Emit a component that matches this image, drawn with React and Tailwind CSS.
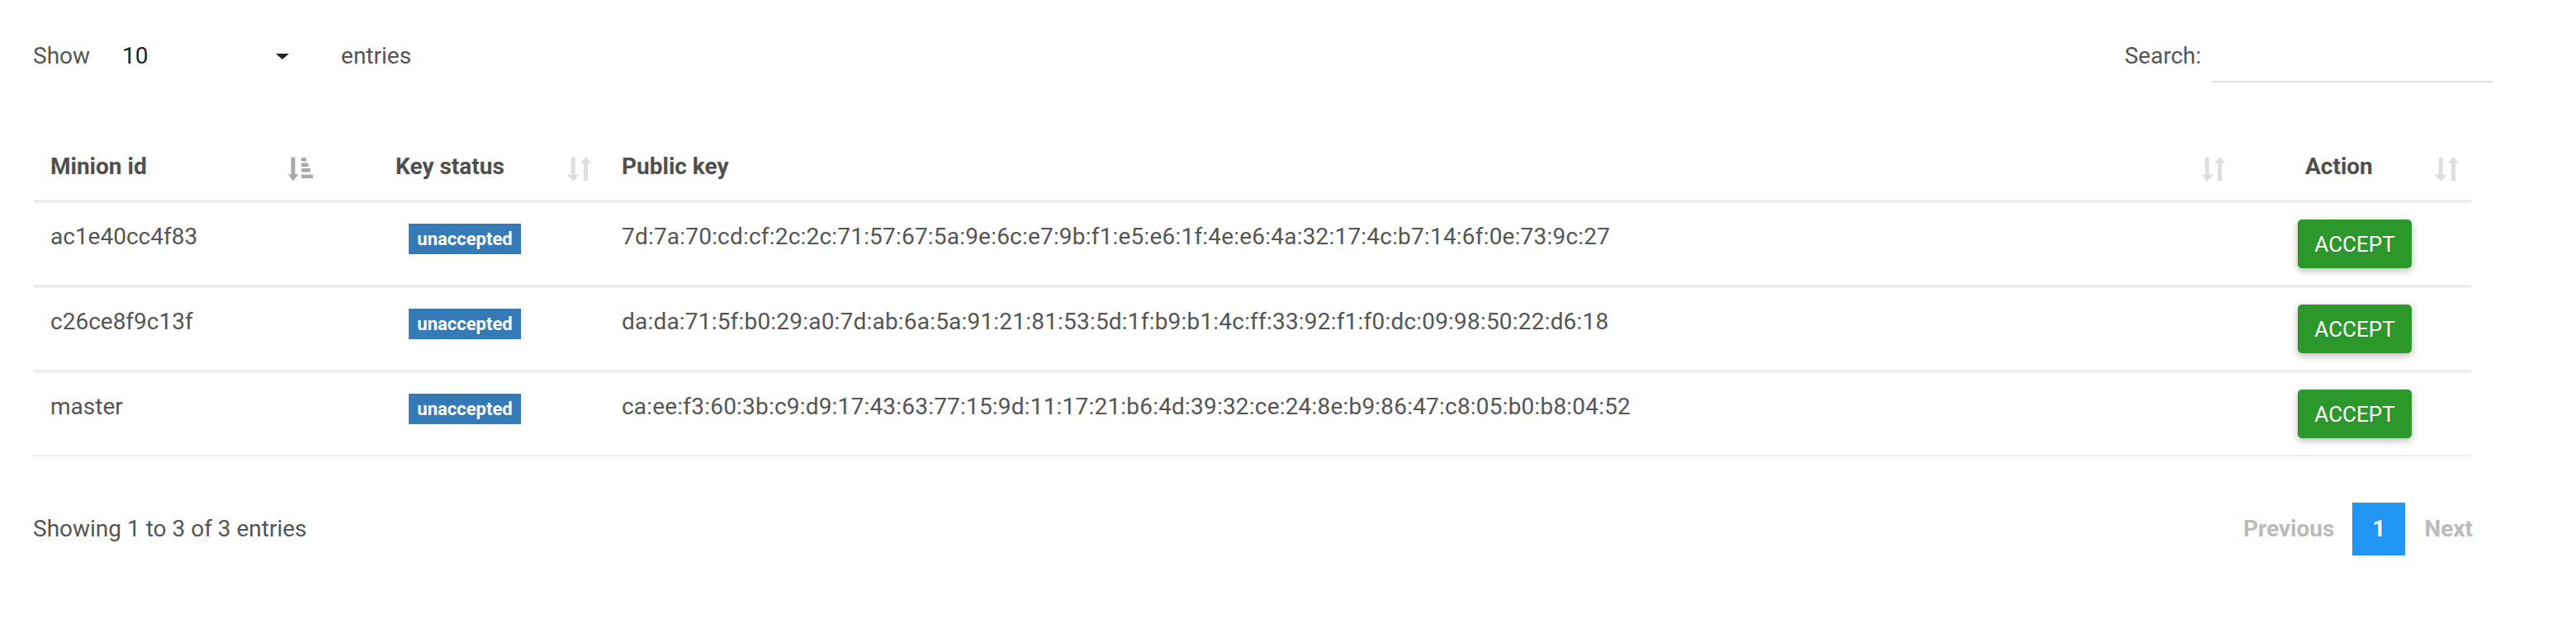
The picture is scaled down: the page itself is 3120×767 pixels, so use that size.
import React from 'react'

const rows = [
  { id: 'ac1e40cc4f83', key: '7d:7a:70:cd:cf:2c:2c:71:57:67:5a:9e:6c:e7:9b:f1:e5:e6:1f:4e:e6:4a:32:17:4c:b7:14:6f:0e:73:9c:27' },
  { id: 'c26ce8f9c13f', key: 'da:da:71:5f:b0:29:a0:7d:ab:6a:5a:91:21:81:53:5d:1f:b9:b1:4c:ff:33:92:f1:f0:dc:09:98:50:22:d6:18' },
  { id: 'master', key: 'ca:ee:f3:60:3b:c9:d9:17:43:63:77:15:9d:11:17:21:b6:4d:39:32:ce:24:8e:b9:86:47:c8:05:b0:b8:04:52' },
]

// sorted ascending icon (arrow + stepped bars)
function SortAsc() {
  return (
    <svg width="30" height="30" viewBox="0 0 30 30" className="block">
      <rect x="3.5" y="0.5" width="5" height="22" fill="#a9a9a9" />
      <polygon points="0,21 12.5,21 6,29.5" fill="#a9a9a9" />
      <rect x="16" y="1" width="6" height="4.5" fill="#a9a9a9" />
      <rect x="16" y="7.5" width="8.5" height="4.5" fill="#a9a9a9" />
      <rect x="16" y="14" width="11" height="4.5" fill="#a9a9a9" />
      <rect x="16" y="21.5" width="14" height="4.5" fill="#a9a9a9" />
    </svg>
  )
}

// unsorted icon (down + up arrows)
function SortBoth() {
  return (
    <svg width="29" height="30" viewBox="0 0 29 30" className="block">
      <rect x="4.7" y="0.7" width="5" height="22" fill="#dedede" />
      <polygon points="0,21.7 14.7,21.7 7.3,30" fill="#dedede" />
      <polygon points="16,8 29,8 22.5,0" fill="#dedede" />
      <rect x="20" y="7" width="5" height="22" fill="#dedede" />
    </svg>
  )
}

const grid = 'grid grid-cols-[360px_336px_1980px_277px]'

export default function App() {
  return (
    <div className="w-[3120px] h-[767px] bg-white px-[40px] pt-[46px] text-[28px] leading-[42px] text-[#555] font-['Roboto','Liberation_Sans',sans-serif]">
      {/* Controls */}
      <div className="flex items-start justify-between w-[2979px]">
        <div className="flex items-start">
          <span className="pt-[1px]">Show</span>
          <div className="relative ml-[9px] w-[287px] h-[54px] pl-[30px] pt-[1px] text-[#222]">
            10
            <span className="absolute right-[55px] top-[19px] w-0 h-0 border-l-[8px] border-r-[8px] border-t-[7px] border-l-transparent border-r-transparent border-t-[#222]" />
          </div>
          <span className="ml-[8px] pt-[1px]">entries</span>
        </div>
        <div className="flex items-start">
          <span className="pt-[1px]">Search:</span>
          <div className="ml-[13px] w-[340px] h-[54px] border-b-2 border-[#dddddd]" />
        </div>
      </div>

      {/* Table */}
      <div className="mt-[61px] w-[2953px]">
        <div className={`${grid} font-bold text-[#4f4f4f]`}>
          <div className="relative pt-[20px] pb-[19px] pl-[21px]">
            Minion id
            <span className="absolute right-[21px] top-[29px]"><SortAsc /></span>
          </div>
          <div className="relative pt-[20px] pb-[19px] pl-[79px]">
            Key status
            <span className="absolute right-[20px] top-[29px]"><SortBoth /></span>
          </div>
          <div className="relative pt-[20px] pb-[19px] pl-[17px]">
            Public key
            <span className="absolute right-[21px] top-[29px]"><SortBoth /></span>
          </div>
          <div className="relative pt-[20px] pb-[19px] pl-[76px]">
            Action
            <span className="absolute right-[15px] top-[29px]"><SortBoth /></span>
          </div>
        </div>

        {rows.map((r, i) => (
          <div
            key={r.id}
            className={`${grid} border-t-4 border-[#eeeeee] ${i === rows.length - 1 ? 'border-b-2' : ''}`}
          >
            <div className="pt-[20px] pb-[20px] pl-[21px]">{r.id}</div>
            <div className="pt-[20px] pb-[20px] pl-[95px]">
              <span className="mt-[5px] flex items-center justify-center w-[136px] h-[37px] bg-[#337ab7] text-white text-[22px] font-bold leading-none">
                unaccepted
              </span>
            </div>
            <div className="pt-[20px] pb-[20px] pl-[17px] whitespace-nowrap tracking-[0.2px]">{r.key}</div>
            <div className="pt-[20px] pb-[20px] pl-[67px]">
              <button className="flex items-center justify-center w-[138px] h-[59px] rounded-[5px] bg-[#2c982c] text-white text-[26px] leading-none shadow-[0_3px_10px_rgba(0,0,0,0.28)]">
                ACCEPT
              </button>
            </div>
          </div>
        ))}
      </div>

      {/* Footer */}
      <div className="mt-[56px] w-[2955px] flex items-center justify-between">
        <span>Showing 1 to 3 of 3 entries</span>
        <div className="flex items-center font-bold text-[#bbbbbb]">
          <span>Previous</span>
          <span className="ml-[22px] flex items-center justify-center w-[64px] h-[64px] bg-[#2196f3] text-white">1</span>
          <span className="ml-[23px]">Next</span>
        </div>
      </div>
    </div>
  )
}
